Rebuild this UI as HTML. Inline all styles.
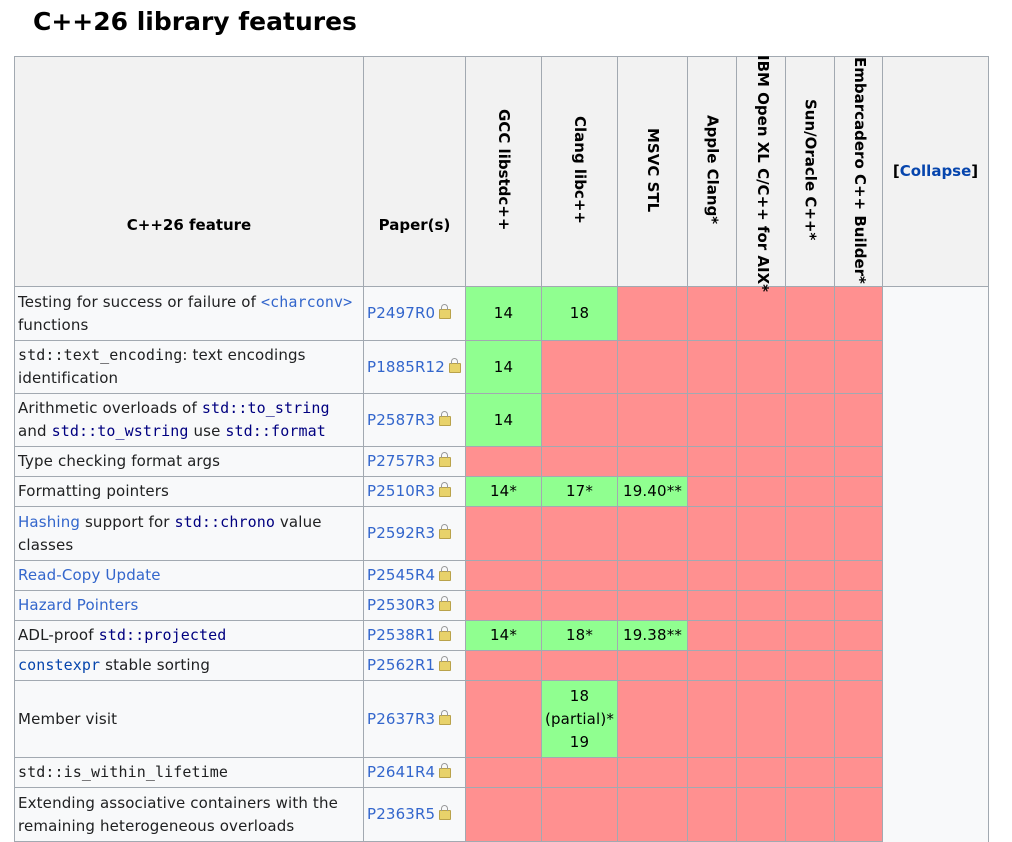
<!DOCTYPE html>
<html><head><meta charset="utf-8"><style>
body{margin:0;background:#fff;font-family:"DejaVu Sans","Liberation Sans",sans-serif;font-size:15px;color:#202122}
h2{position:absolute;left:33px;top:7px;margin:0;font-size:25px;font-weight:bold;color:#000}
table{position:absolute;left:14px;top:56px;border-collapse:collapse;table-layout:fixed;width:975px}
td,th{border:1px solid #a2a9b1;padding:0 3px;line-height:23px;box-sizing:border-box}
td{letter-spacing:0.15px}
th{background:#f2f2f2;font-weight:bold;color:#000;text-align:center}
td{background:#f8f9fa}
.y{background:#90ff90;text-align:center;color:#000}
.n{background:#ff9090}
.v{vertical-align:middle;padding:0;position:relative;overflow:visible}
.v span{writing-mode:vertical-rl;display:inline-block;white-space:nowrap;padding-top:4px}
a{color:#3366cc;text-decoration:none}
code{font-family:"DejaVu Sans Mono","Liberation Mono",monospace;font-size:15px;letter-spacing:0.1px}
.c{color:#000080}
.lk{display:inline-block;width:10px;height:8px;background:#e8d26a;border:1px solid #b9a24a;border-radius:1px;position:relative;margin-left:4px;vertical-align:-1px}
.lk:before{content:"";position:absolute;left:1px;top:-6px;width:5px;height:5px;border:1.5px solid #999;border-bottom:none;border-radius:4px 4px 0 0}
.hb{vertical-align:bottom;padding-bottom:49px}
</style></head><body>
<h2>C++26 library features</h2>
<table>
<colgroup><col style="width:349px"><col style="width:102px"><col style="width:76px"><col style="width:76px"><col style="width:70px"><col style="width:49px"><col style="width:49px"><col style="width:49px"><col style="width:48px"><col style="width:106px"></colgroup>
<tr style="height:230px">
<th class="hb">C++26 feature</th><th class="hb">Paper(s)</th>
<th class="v"><span>GCC libstdc++</span></th>
<th class="v"><span>Clang libc++</span></th>
<th class="v"><span>MSVC STL</span></th>
<th class="v"><span>Apple Clang*</span></th>
<th class="v"><span style="position:absolute;left:14px;top:-6px">IBM Open XL C/C++ for AIX*</span></th>
<th class="v"><span>Sun/Oracle C++*</span></th>
<th class="v"><span style="position:absolute;left:13px;top:-4px">Embarcadero C++ Builder*</span></th>
<th>[<a style="color:#0645ad">Collapse</a>]</th>
</tr>
<tr style="height:54px"><td>Testing for success or failure of <code style="color:#3366cc">&lt;charconv&gt;</code> functions</td><td><a>P2497R0</a><i class="lk"></i></td><td class="y">14</td><td class="y">18</td><td class="n"></td><td class="n"></td><td class="n"></td><td class="n"></td><td class="n"></td><td rowspan="13" style="border-bottom:none"></td></tr>
<tr style="height:53px"><td><code>std::text_encoding</code>: text encodings identification</td><td><a>P1885R12</a><i class="lk"></i></td><td class="y">14</td><td class="n"></td><td class="n"></td><td class="n"></td><td class="n"></td><td class="n"></td><td class="n"></td></tr>
<tr style="height:53px"><td>Arithmetic overloads of <code class="c">std::to_string</code> and <code class="c">std::to_wstring</code> use <code class="c">std::format</code></td><td><a>P2587R3</a><i class="lk"></i></td><td class="y">14</td><td class="n"></td><td class="n"></td><td class="n"></td><td class="n"></td><td class="n"></td><td class="n"></td></tr>
<tr style="height:30px"><td>Type checking format args</td><td><a>P2757R3</a><i class="lk"></i></td><td class="n"></td><td class="n"></td><td class="n"></td><td class="n"></td><td class="n"></td><td class="n"></td><td class="n"></td></tr>
<tr style="height:30px"><td>Formatting pointers</td><td><a>P2510R3</a><i class="lk"></i></td><td class="y">14*</td><td class="y">17*</td><td class="y">19.40**</td><td class="n"></td><td class="n"></td><td class="n"></td><td class="n"></td></tr>
<tr style="height:54px"><td><a>Hashing</a> support for <code class="c">std::chrono</code> value classes</td><td><a>P2592R3</a><i class="lk"></i></td><td class="n"></td><td class="n"></td><td class="n"></td><td class="n"></td><td class="n"></td><td class="n"></td><td class="n"></td></tr>
<tr style="height:30px"><td><a>Read-Copy Update</a></td><td><a>P2545R4</a><i class="lk"></i></td><td class="n"></td><td class="n"></td><td class="n"></td><td class="n"></td><td class="n"></td><td class="n"></td><td class="n"></td></tr>
<tr style="height:30px"><td><a>Hazard Pointers</a></td><td><a>P2530R3</a><i class="lk"></i></td><td class="n"></td><td class="n"></td><td class="n"></td><td class="n"></td><td class="n"></td><td class="n"></td><td class="n"></td></tr>
<tr style="height:30px"><td>ADL-proof <code class="c">std::projected</code></td><td><a>P2538R1</a><i class="lk"></i></td><td class="y">14*</td><td class="y">18*</td><td class="y">19.38**</td><td class="n"></td><td class="n"></td><td class="n"></td><td class="n"></td></tr>
<tr style="height:30px"><td><code><a style="color:#0645ad">constexpr</a></code> stable sorting</td><td><a>P2562R1</a><i class="lk"></i></td><td class="n"></td><td class="n"></td><td class="n"></td><td class="n"></td><td class="n"></td><td class="n"></td><td class="n"></td></tr>
<tr style="height:77px"><td>Member visit</td><td><a>P2637R3</a><i class="lk"></i></td><td class="n"></td><td class="y">18<br>(partial)*<br>19</td><td class="n"></td><td class="n"></td><td class="n"></td><td class="n"></td><td class="n"></td></tr>
<tr style="height:30px"><td><code>std::is_within_lifetime</code></td><td><a>P2641R4</a><i class="lk"></i></td><td class="n"></td><td class="n"></td><td class="n"></td><td class="n"></td><td class="n"></td><td class="n"></td><td class="n"></td></tr>
<tr style="height:54px"><td>Extending associative containers with the remaining heterogeneous overloads</td><td><a>P2363R5</a><i class="lk"></i></td><td class="n"></td><td class="n"></td><td class="n"></td><td class="n"></td><td class="n"></td><td class="n"></td><td class="n"></td></tr>
</table>
</body></html>
